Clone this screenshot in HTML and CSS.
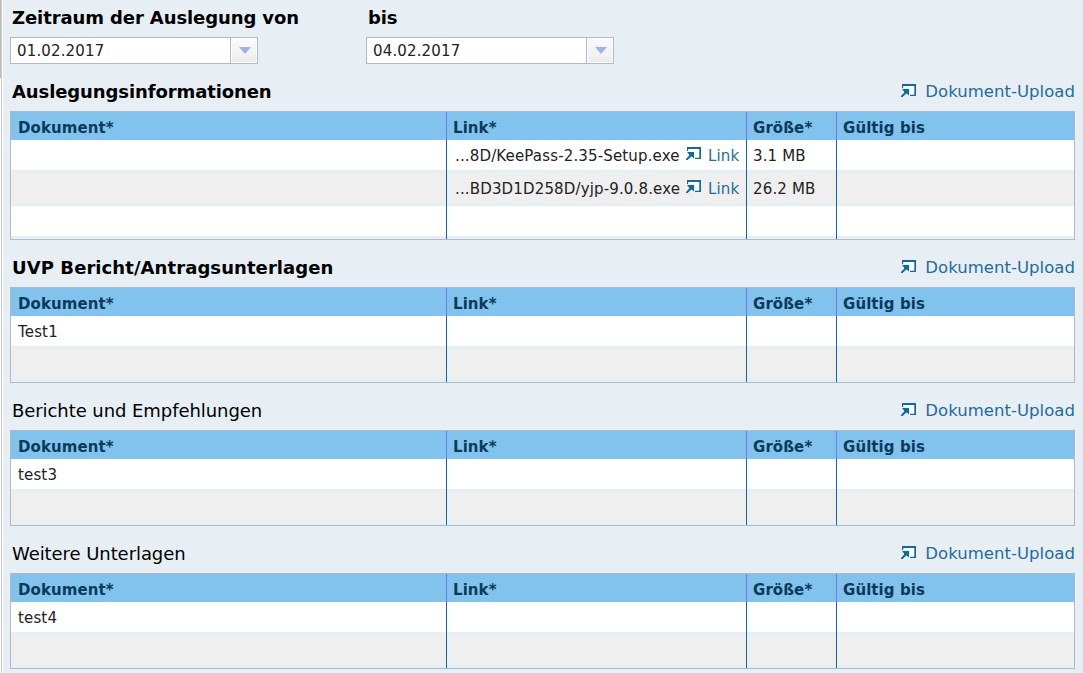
FILE: index.html
```html
<!DOCTYPE html>
<html lang="de">
<head>
<meta charset="utf-8">
<title>Auslegung</title>
<link rel="stylesheet" href="styles.css">
</head>
<body>
<svg class="defs" aria-hidden="true">
  <symbol id="popup" viewBox="0 0 15 13">
    <path fill="#fff" d="M2 1H14V11H9V4H2Z"/>
    <path d="M1 0H15V12H9V10.8H13.3V2H2.2V4H1Z"/>
    <path d="M1.5 5H8V11.5L6.3 10L5.3 9.6L1.6 13H0V12L3.2 8.6L2.8 7L1.5 6Z"/>
  </symbol>
</svg>
<div class="page">
  <div class="edge"><div class="thumb"></div></div>
  <main class="form">
    <div class="period">
      <div class="field">
        <label class="label"><span>Zeitraum der Auslegung von</span></label>
        <div class="date"><span class="value">01.02.2017</span><span class="drop"><svg width="12" height="7"><path d="M0 0H12L6 7Z"/></svg></span></div>
      </div>
      <div class="field">
        <label class="label"><span>bis</span></label>
        <div class="date"><span class="value">04.02.2017</span><span class="drop"><svg width="12" height="7"><path d="M0 0H12L6 7Z"/></svg></span></div>
      </div>
    </div>

    <section>
      <div class="bar"><h2 class="title bold">Auslegungsinformationen</h2><a class="upload"><svg><use href="#popup"/></svg><span>Dokument-Upload</span></a></div>
      <div class="table">
        <div class="row head"><div>Dokument*</div><div>Link*</div><div>Größe*</div><div>Gültig bis</div></div>
        <div class="row"><div></div><div class="file"><span class="name">...8D/KeePass-2.35-Setup.exe</span><svg><use href="#popup"/></svg><a>Link</a></div><div>3.1 MB</div><div></div></div>
        <div class="row odd"><div></div><div class="file"><span class="name">...BD3D1D258D/yjp-9.0.8.exe</span><svg><use href="#popup"/></svg><a>Link</a></div><div>26.2 MB</div><div></div></div>
        <div class="row"><div></div><div></div><div></div><div></div></div>
      </div>
    </section>

    <section>
      <div class="bar"><h2 class="title bold wide">UVP Bericht/Antragsunterlagen</h2><a class="upload"><svg><use href="#popup"/></svg><span>Dokument-Upload</span></a></div>
      <div class="table">
        <div class="row head"><div>Dokument*</div><div>Link*</div><div>Größe*</div><div>Gültig bis</div></div>
        <div class="row"><div>Test1</div><div></div><div></div><div></div></div>
        <div class="row odd"><div></div><div></div><div></div><div></div></div>
      </div>
    </section>

    <section>
      <div class="bar"><h2 class="title">Berichte und Empfehlungen</h2><a class="upload"><svg><use href="#popup"/></svg><span>Dokument-Upload</span></a></div>
      <div class="table">
        <div class="row head"><div>Dokument*</div><div>Link*</div><div>Größe*</div><div>Gültig bis</div></div>
        <div class="row"><div>test3</div><div></div><div></div><div></div></div>
        <div class="row odd"><div></div><div></div><div></div><div></div></div>
      </div>
    </section>

    <section>
      <div class="bar"><h2 class="title">Weitere Unterlagen</h2><a class="upload"><svg><use href="#popup"/></svg><span>Dokument-Upload</span></a></div>
      <div class="table">
        <div class="row head"><div>Dokument*</div><div>Link*</div><div>Größe*</div><div>Gültig bis</div></div>
        <div class="row"><div>test4</div><div></div><div></div><div></div></div>
        <div class="row odd"><div></div><div></div><div></div><div></div></div>
      </div>
    </section>
  </main>
</div>
</body>
</html>
```
FILE: styles.css
```css
* { box-sizing: border-box; }
body {
  margin: 0;
  background: #e7eff5;
  color: #000;
  font-family: Verdana, "DejaVu Sans", sans-serif;
  font-size: 15px;
  letter-spacing: 0.15px;
}
.defs { position: absolute; width: 0; height: 0; }
.page { display: flex; height: 673px; overflow: hidden; }
.edge {
  width: 3px;
  background: linear-gradient(90deg, #fff 1px, #ccc 1px, #ccc 2px, #fff 2px);
}
.thumb { width: 1px; height: 78px; background: #bbb; }
.form { flex: 1; padding: 0 8px 0 7px; }
.period { display: flex; gap: 108px; height: 64px; }
.field { width: 248px; }
.label {
  display: block;
  height: 37px;
  padding-left: 2px;
  line-height: 36px;
  font-size: 18px;
  font-weight: bold;
  letter-spacing: -0.1px;
  white-space: nowrap;
}
.date {
  display: flex;
  height: 27px;
  border: 1px solid #b0b8cc;
  background: #fff;
}
.value { flex: 1; padding-left: 6px; line-height: 26px; color: #222; }
.drop {
  display: flex;
  align-items: center;
  justify-content: center;
  width: 26px;
  padding-left: 2px;
  border: 1px solid #fff;
  background: linear-gradient(#fafafa, #ededed);
  box-shadow: -1px 0 #b0b8cc;
}
.drop svg { flex: none; fill: #9fb4da; }
.bar {
  display: flex;
  justify-content: space-between;
  height: 47px;
  padding: 8px 0 0 2px;
  line-height: 39px;
  white-space: nowrap;
}
.title {
  margin: 0;
  font-size: 18px;
  font-weight: normal;
  letter-spacing: -0.07px;
  line-height: 40px;
}
.bold { font-weight: bold; letter-spacing: -0.1px; }
.wide { letter-spacing: 0.08px; }
.upload {
  display: flex;
  color: #1f6b9c;
  font-size: 16.5px;
  letter-spacing: 0.03px;
  line-height: 40px;
}
.upload svg { width: 15px; height: 13px; margin: 12px 9px 0 0; fill: #14699b; }
.table { border: 1px solid #b0b8cc; background: #e5f0f4; }
.row {
  display: grid;
  grid-template-columns: 436px 300px 90px 1fr;
  height: 33px;
  background: linear-gradient(#fff 30px, #e5f0f4 30px);
  line-height: 32px;
  color: #222;
  white-space: nowrap;
}
.odd { background: linear-gradient(#efefef 30px, #e5f0f4 30px); }
.row > div { padding-left: 6px; }
.row > div:first-child { padding-left: 7px; }
.row > div:not(:last-child) {
  border-right: 1px solid;
  border-image: linear-gradient(#11699a 32px, #8ab4cc 32px) 1;
}
.row.head {
  height: 28px;
  background: #82c3ed;
  color: #0b3a5c;
  font-weight: bold;
  letter-spacing: 0.08px;
  line-height: 32px;
}
.row.head > div:not(:last-child) { border-image: none; border-color: #7378ef; }
.row .file { display: flex; padding-left: 8px; }
.file .name { width: 231px; }
.file svg { width: 15px; height: 13px; margin-top: 7px; fill: #14699b; }
.file a { margin-left: 7px; color: #1f6b9c; }
```
